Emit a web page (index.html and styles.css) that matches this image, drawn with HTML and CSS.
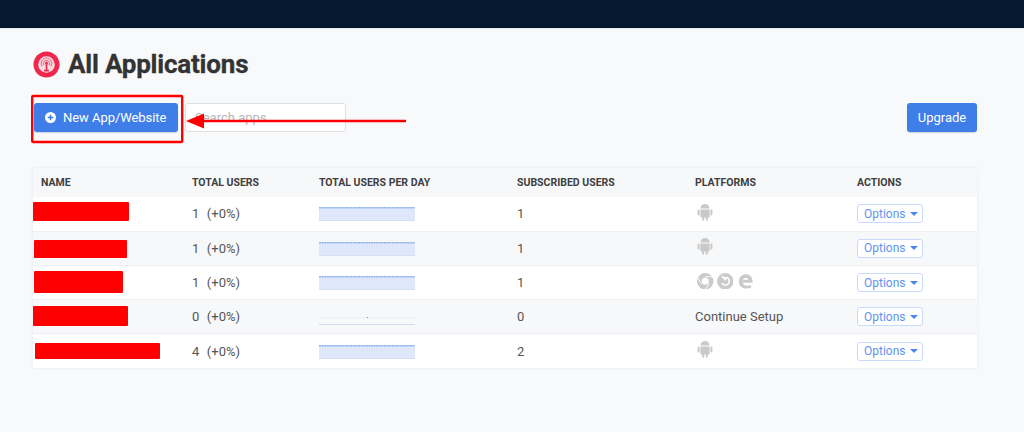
FILE: index.html
```html
<!DOCTYPE html>
<html lang="en">
<head>
<meta charset="utf-8">
<title>All Applications</title>
<link rel="stylesheet" href="styles.css">
</head>
<body>
<svg class="defs" width="0" height="0" aria-hidden="true">
  <symbol id="android" viewBox="0 0 16 18">
    <path d="M3.4 5.6a4.6 4.6 0 0 1 9.2 0z"/>
    <path d="M3.4 6.4h9.2v7.2c0 .6-.4 1-1 1h-.8v2.2a1 1 0 0 1-2 0v-2.2H7.2v2.2a1 1 0 0 1-2 0v-2.2h-.8c-.6 0-1-.4-1-1z"/>
    <rect x="0.6" y="6.4" width="2" height="6" rx="1"/>
    <rect x="13.4" y="6.4" width="2" height="6" rx="1"/>
  </symbol>
  <symbol id="spark" viewBox="0 0 96 14" preserveAspectRatio="none">
    <rect x="0" y="0" width="96" height="14" fill="#dfe8fb"/>
    <line x1="0" y1=".8" x2="96" y2=".8" stroke="#8fb4f2" stroke-width="1.6" stroke-dasharray="2 .6"/>
    <line x1="0" y1="13.500" x2="96" y2="13.500" stroke="#d5dff3" stroke-width="1"/>
  </symbol>
</svg>

<header class="topbar"></header>

<main class="page">
  <h1 class="title">
    <svg class="logo" viewBox="0 0 28 28" aria-hidden="true">
      <circle cx="14" cy="14" r="13.5" fill="#f0274d"/>
      <circle cx="14" cy="14" r="8.6" fill="#fbdde3"/>
      <path d="M9.6 16a5.4 5.4 0 1 1 8.8 0M11.3 14.8a3.2 3.2 0 1 1 5.4 0" fill="none" stroke="#f0708a" stroke-width="1.1"/>
      <path d="M14 12.5v7.5M11.5 20.4h5" stroke="#f0274d" stroke-width="1.7" fill="none"/>
      <circle cx="14" cy="12.6" r="1.4" fill="#f0274d"/>
    </svg>
    <span>All Applications</span>
  </h1>

  <div class="toolbar">
    <button class="btn btn-new">
      <svg class="plus" viewBox="0 0 12 12" aria-hidden="true">
        <circle cx="6" cy="6" r="6" fill="#fff"/>
        <path d="M6 3v6M3 6h6" stroke="#3f7de8" stroke-width="1.7"/>
      </svg>
      New App/Website
    </button>
    <input class="search" type="text" placeholder="Search apps">
    <button class="btn btn-upgrade">Upgrade</button>
  </div>

  <section class="table">
    <div class="row head">
      <div>NAME</div><div>TOTAL USERS</div><div>TOTAL USERS PER DAY</div><div>SUBSCRIBED USERS</div><div>PLATFORMS</div><div>ACTIONS</div>
    </div>

    <div class="row r1">
      <div class="name"><i class="mark m1"></i></div>
      <div class="total"><span>1</span><span>(+0%)</span></div>
      <div><svg class="spark"><use href="#spark"/></svg></div>
      <div>1</div>
      <div class="icons"><svg class="android"><use href="#android"/></svg></div>
      <div><button class="options">Options<b class="caret"></b></button></div>
    </div>

    <div class="row r2 alt">
      <div class="name"><i class="mark m2"></i></div>
      <div class="total"><span>1</span><span>(+0%)</span></div>
      <div><svg class="spark"><use href="#spark"/></svg></div>
      <div>1</div>
      <div class="icons"><svg class="android"><use href="#android"/></svg></div>
      <div><button class="options">Options<b class="caret"></b></button></div>
    </div>

    <div class="row r3">
      <div class="name"><i class="mark m3"></i></div>
      <div class="total"><span>1</span><span>(+0%)</span></div>
      <div><svg class="spark"><use href="#spark"/></svg></div>
      <div>1</div>
      <div class="icons browsers">
        <svg class="browser" viewBox="0 0 16 16" aria-hidden="true">
          <path fill-rule="evenodd" d="M8 0a8 8 0 1 1 0 16A8 8 0 0 1 8 0zm0 4.6a3.4 3.4 0 1 0 0 6.8 3.4 3.4 0 0 0 0-6.8z"/>
          <path d="M8 3.6h6.6M4.2 10.4 1 4.8M11.8 10.2 8.4 15.8" stroke="#fff" stroke-width=".9" fill="none"/>
        </svg>
        <svg class="browser" viewBox="0 0 16 16" aria-hidden="true">
          <circle cx="8" cy="8" r="8"/>
          <path d="M4.6 3.2 8 6.2V4.4c2.2 0 3.8 1.6 3.8 3.6S10.200 11.600 8 11.600c-1.400 0-2.600-.7-3.200-1.800" fill="none" stroke="#fff" stroke-width="1.500"/>
        </svg>
        <svg class="browser edge" viewBox="0 0 16 16" aria-hidden="true">
          <path d="M1 9.600C.4 4.200 3.800.6 8.400.6c4.300 0 7.100 3 7.100 7.400v1.600H5.200c.3 2.700 3.800 4.200 8.800 2.400v3C8.200 16.800 1.600 15.400 1 9.600zm4.300-3.100h5.800C11 3.800 5.800 3.800 5.300 6.500z"/>
        </svg>
      </div>
      <div><button class="options">Options<b class="caret"></b></button></div>
    </div>

    <div class="row r4 alt">
      <div class="name"><i class="mark m4"></i></div>
      <div class="total"><span>0</span><span>(+0%)</span></div>
      <div class="flat"><i class="dot"></i></div>
      <div>0</div>
      <div>Continue Setup</div>
      <div><button class="options">Options<b class="caret"></b></button></div>
    </div>

    <div class="row r5">
      <div class="name"><i class="mark m5"></i></div>
      <div class="total"><span>4</span><span>(+0%)</span></div>
      <div><svg class="spark"><use href="#spark"/></svg></div>
      <div>2</div>
      <div class="icons"><svg class="android"><use href="#android"/></svg></div>
      <div><button class="options">Options<b class="caret"></b></button></div>
    </div>
  </section>
</main>

<svg class="annotation" viewBox="0 0 1024 432" aria-hidden="true">
  <rect x="32.2" y="96" width="150" height="46" rx="1" fill="none" stroke="#f00" stroke-width="2.4"/>
  <line x1="200" y1="121" x2="406" y2="121" stroke="#f00" stroke-width="2.6"/>
  <polygon points="186,121 204,113.500 204,128.500" fill="#f00"/>
</svg>
</body>
</html>
```

FILE: styles.css
```css
* { box-sizing: border-box; }

html, body {
  margin: 0;
  height: 432px;
  overflow: hidden;
}

body {
  position: relative;
  background: #f8f9fb;
  color: #4d4d4d;
  font-family: Roboto, "Liberation Sans", sans-serif;
  font-size: 13px;
}

.defs { position: absolute; }

.topbar {
  height: 29px;
  background: #05182f;
  border-bottom: 1px solid #e6e9ee;
}

.page { padding: 20px 47px 0 33px; }

.title {
  display: flex;
  align-items: center;
  gap: 8px;
  height: 30px;
  margin: 0 0 0 1px;
  color: #333;
  font-size: 26px;
  font-weight: 700;
  letter-spacing: -0.2px;
  -webkit-text-stroke: .3px #333;
}

.logo { width: 27px; height: 27px; flex: none; margin-left: -1px; }

.toolbar {
  display: flex;
  align-items: center;
  gap: 7px;
  margin: 24px 0 0 1px;
}

.btn {
  height: 29px;
  border: 0;
  border-radius: 3px;
  background: #3f7de8;
  color: #fff;
  font: 400 13px Roboto, sans-serif;
  box-shadow: 0 1px 1px rgba(40, 60, 100, .2);
}

.btn-new {
  display: flex;
  align-items: center;
  gap: 7px;
  width: 144px;
  padding: 0 0 0 11px;
  letter-spacing: -.05px;
}

.plus { width: 11px; height: 11px; }

.search {
  width: 161px;
  height: 29px;
  padding: 0 9px;
  border: 1px solid #dedfe2;
  border-radius: 3px;
  background: #fff;
  font: 400 13px Roboto, sans-serif;
}

.search::placeholder { color: #b5b7ba; opacity: 1; }

.btn-upgrade { width: 70px; margin-left: auto; }

.table {
  margin-top: 36px;
  background: #fff;
  box-shadow: 0 0 3px rgba(50, 60, 80, .1);
}

.row {
  position: relative;
  display: grid;
  grid-template-columns: 151px 127px 198px 178px 162px 128px;
  align-items: center;
  height: 34px;
  border-bottom: 1px solid #eff0f3;
  color: #555;
  font-size: 13px;
}

.row > div { padding-left: 8px; }

.row.alt { background: #f7f8fa; }

.head {
  height: 29px;
  background: #f7f8fa;
  color: #3f3f3f;
  font-size: 10.500px;
  font-weight: 700;
  border-bottom: 0;
}

.r1, .r2 { height: 34.500px; }
.r5 { border-bottom: 0; }

.total { display: flex; gap: 7.500px; }

.spark { display: block; width: 96px; height: 14px; margin-top: 1px; }

.flat {
  position: relative;
  height: 16px;
}

.flat::before,
.flat::after {
  content: "";
  position: absolute;
  left: 8px;
  width: 96px;
  height: 1px;
}

.flat::before { top: 8px; background: #eef0f3; }
.flat::after { top: 15px; background: #d5daee; }

.dot {
  position: absolute;
  left: 56px;
  top: 8px;
  z-index: 1;
  width: 1px;
  height: 1px;
  background: #5a8bea;
}

.icons { display: flex; align-items: center; height: 24px; }

.android {
  width: 16px;
  height: 18px;
  margin: -4px 0 0 2px;
  fill: #c9c9c9;
}

.browsers { gap: 2px; margin-top: -3px; padding-left: 10px !important; }

.browser {
  width: 16.500px;
  height: 16.500px;
  margin-right: 1px;
  fill: #cbcbcb;
}

.edge { width: 15px; margin-left: 2px; }

.options {
  display: flex;
  align-items: center;
  gap: 4px;
  width: 66px;
  height: 19px;
  padding: 0 0 0 6px;
  border: 1px solid #c9dbfa;
  border-radius: 3px;
  background: #fff;
  color: #5f93ef;
  font: 400 12px Roboto, sans-serif;
}

.caret {
  width: 0;
  height: 0;
  border: 4px solid transparent;
  border-top-color: #4a86ee;
  border-bottom: 0;
}

.mark {
  position: absolute;
  display: block;
  background: #f00;
  border-radius: 1px;
}

.m1 { left: 0; top: 5px; width: 96px; height: 19px; }
.m2 { left: 1px; top: 8.500px; width: 93px; height: 18px; }
.m3 { left: 1px; top: 5px; width: 89px; height: 22px; }
.m4 { left: 0; top: 6px; width: 95px; height: 20px; }
.m5 { left: 2px; top: 9px; width: 125px; height: 16px; }

.annotation {
  position: absolute;
  inset: 0;
  width: 1024px;
  height: 432px;
  pointer-events: none;
}
```
